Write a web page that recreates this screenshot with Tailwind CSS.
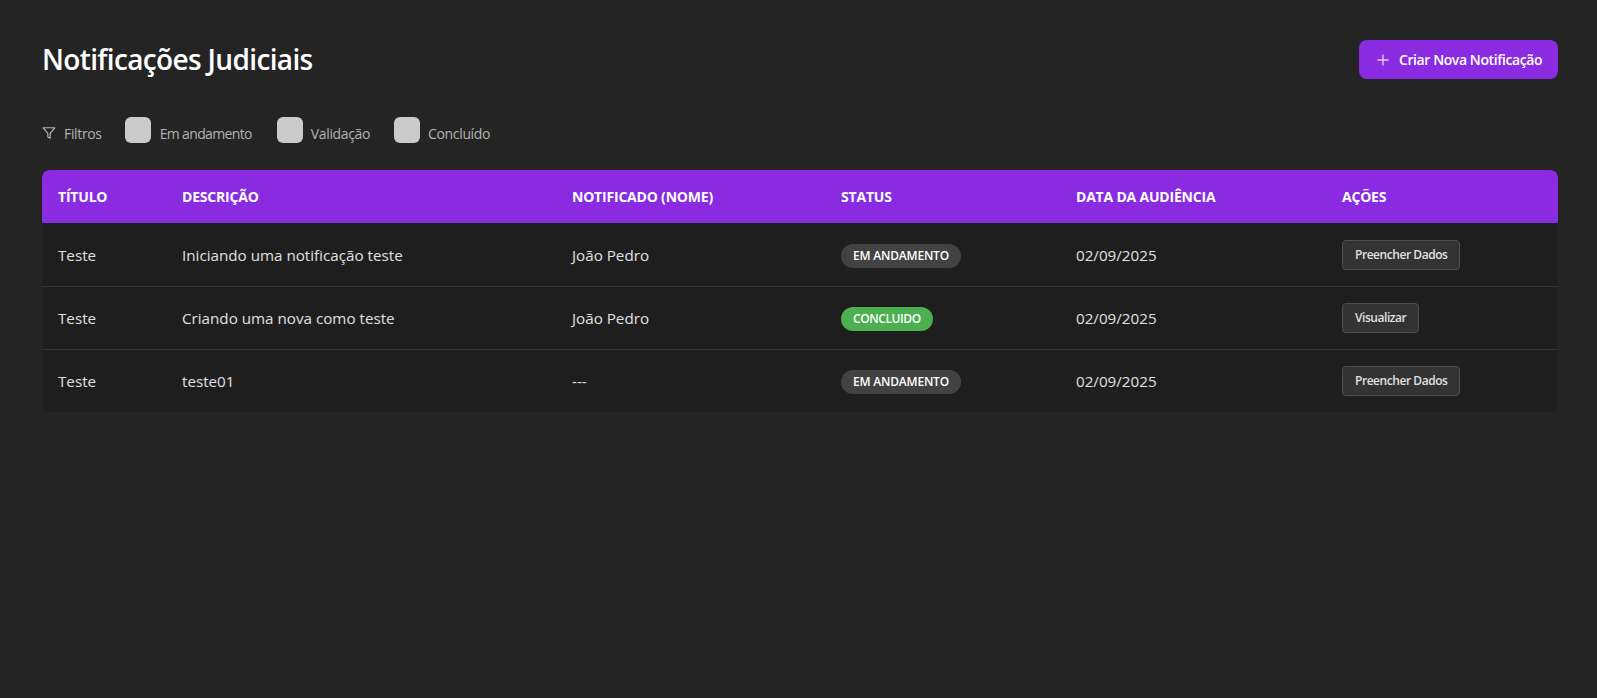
<!DOCTYPE html>
<html lang="pt-BR">
<head>
  <meta charset="UTF-8">
  <title>Notificações Judiciais</title>
  <script src="https://cdn.jsdelivr.net/npm/@tailwindcss/browser@4"></script>
</head>
<body class="bg-[#242424] min-h-screen text-white font-['Open_Sans','Noto_Sans',sans-serif]">
  <main class="pl-[42px] pr-[39px] pt-10">

    <!-- Header -->
    <header class="flex items-center justify-between h-[39px]">
      <h1 class="text-[28px] font-semibold tracking-[-0.65px] leading-none -mt-[2px]">Notificações Judiciais</h1>
      <button class="h-[39px] w-[199px] flex items-center justify-center gap-2 rounded-lg bg-[#8a2be2] text-[14px] font-semibold tracking-[-0.4px]">
        <svg class="w-4 h-4 text-[#e4ccf8]" viewBox="0 0 24 24" fill="none" stroke="currentColor" stroke-width="2" stroke-linecap="round"><path d="M12 4.5v15M4.5 12h15"/></svg>
        Criar Nova Notificação
      </button>
    </header>

    <!-- Filters -->
    <div class="flex items-center mt-[38px] h-[26px] text-[14px] text-[#b3b3b3] tracking-[-0.35px]">
      <svg class="w-[14px] h-[14px] mr-[8px] mt-[6px]" viewBox="0 0 24 24" fill="none" stroke="currentColor" stroke-width="2" stroke-linejoin="round"><path d="M22 3H2l8 9.5V19l4 2v-8.5z"/></svg>
      <span class="pt-[6px]">Filtros</span>
      <label class="flex items-center gap-[9px] ml-[23px]"><span class="w-[26px] h-[26px] rounded-md bg-[#cbcbcb]"></span><span class="pt-[6px] tracking-[-0.65px]">Em andamento</span></label>
      <label class="flex items-center gap-2 ml-[25px]"><span class="w-[26px] h-[26px] rounded-md bg-[#cbcbcb]"></span><span class="pt-[6px]">Validação</span></label>
      <label class="flex items-center gap-2 ml-[24px]"><span class="w-[26px] h-[26px] rounded-md bg-[#cbcbcb]"></span><span class="pt-[6px]">Concluído</span></label>
    </div>

    <!-- Table -->
    <div class="mt-[27px] rounded-lg overflow-hidden bg-[#1e1e1e]">
      <table class="w-full table-fixed border-collapse text-left text-[15.2px]">
        <colgroup>
          <col class="w-[124px]">
          <col class="w-[390px]">
          <col class="w-[269px]">
          <col class="w-[235px]">
          <col class="w-[266px]">
          <col>
        </colgroup>
        <thead class="bg-[#8a2be2] text-[14px] uppercase tracking-[-0.2px]">
          <tr class="h-[53px]">
            <th class="px-4 font-bold">Título</th>
            <th class="px-4 font-bold">Descrição</th>
            <th class="px-4 font-bold">Notificado (Nome)</th>
            <th class="px-4 font-bold">Status</th>
            <th class="px-4 font-bold">Data da Audiência</th>
            <th class="px-4 font-bold">Ações</th>
          </tr>
        </thead>
        <tbody class="text-[#e0e0e0]">
          <tr class="h-[63px] border-b border-[#333333]">
            <td class="px-4 pt-[2px]">Teste</td>
            <td class="px-4 pt-[2px]">Iniciando uma notificação teste</td>
            <td class="px-4 pt-[2px]">João Pedro</td>
            <td class="px-4 pt-[2px]"><span class="inline-block px-3 h-6 leading-6 rounded-full bg-[#424242] text-white text-[12px] font-semibold uppercase tracking-[-0.2px]">Em andamento</span></td>
            <td class="px-4 pt-[2px]">02/09/2025</td>
            <td class="px-4 pt-[2px]"><button class="h-[30px] px-3 rounded border border-[#4f4f4f] bg-[#333333] text-[12px] font-semibold text-[#e0e0e0] tracking-[-0.45px]">Preencher Dados</button></td>
          </tr>
          <tr class="h-[63px] border-b border-[#333333]">
            <td class="px-4 pt-[2px]">Teste</td>
            <td class="px-4 pt-[2px]">Criando uma nova como teste</td>
            <td class="px-4 pt-[2px]">João Pedro</td>
            <td class="px-4 pt-[2px]"><span class="inline-block px-3 h-6 leading-6 rounded-full bg-[#4caf50] text-white text-[12px] font-semibold uppercase tracking-[-0.4px]">Concluido</span></td>
            <td class="px-4 pt-[2px]">02/09/2025</td>
            <td class="px-4"><button class="h-[30px] px-3 rounded border border-[#4f4f4f] bg-[#333333] text-[12px] font-semibold text-[#e0e0e0] tracking-[-0.45px]">Visualizar</button></td>
          </tr>
          <tr class="h-[63px]">
            <td class="px-4 pt-[2px]">Teste</td>
            <td class="px-4 pt-[2px]">teste01</td>
            <td class="px-4 pt-[2px]">---</td>
            <td class="px-4 pt-[2px]"><span class="inline-block px-3 h-6 leading-6 rounded-full bg-[#424242] text-white text-[12px] font-semibold uppercase tracking-[-0.2px]">Em andamento</span></td>
            <td class="px-4 pt-[2px]">02/09/2025</td>
            <td class="px-4"><button class="h-[30px] px-3 rounded border border-[#4f4f4f] bg-[#333333] text-[12px] font-semibold text-[#e0e0e0] tracking-[-0.45px]">Preencher Dados</button></td>
          </tr>
        </tbody>
      </table>
    </div>
  </main>
</body>
</html>
